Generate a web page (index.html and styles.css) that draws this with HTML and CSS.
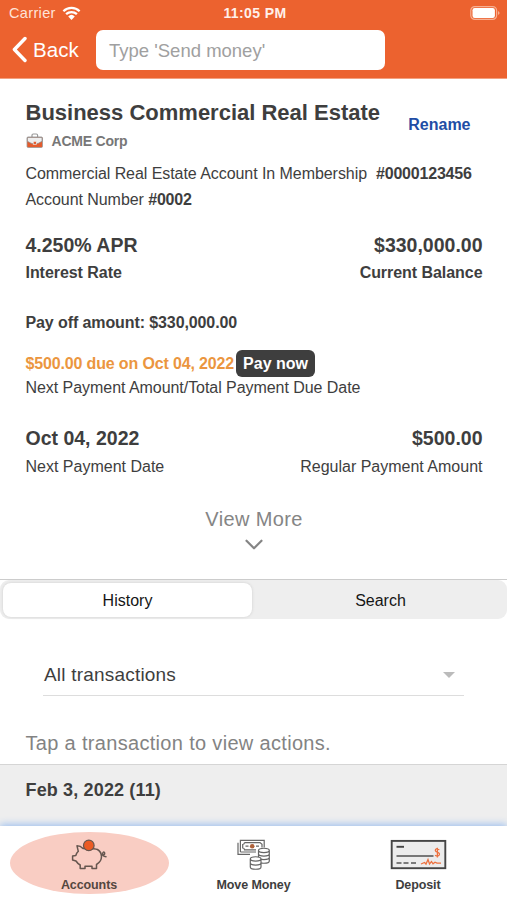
FILE: index.html
```html
<!DOCTYPE html>
<html lang="en">
<head>
<meta charset="utf-8">
<title>Business Commercial Real Estate</title>
<link rel="stylesheet" href="styles.css">
</head>
<body>
<div class="app">
  <header class="top">
    <div class="status">
      <div class="carrier"><span>Carrier</span>
        <svg width="19" height="15" viewBox="0 0 19 15"><path d="M1.4 5.2A11.6 11.6 0 0 1 17.6 5.2M4.1 8.2A7.8 7.8 0 0 1 14.9 8.2" fill="none" stroke="#fff" stroke-width="2.3"/><path d="M6.2 10.4A4.8 4.8 0 0 1 12.8 10.4L9.5 13.9Z" fill="#fff"/></svg>
      </div>
      <div class="time">11:05 PM</div>
      <div class="battery"><svg width="31" height="15" viewBox="0 0 31 15"><rect x=".8" y=".6" width="25.8" height="12.800" rx="4" fill="none" stroke="#f7af92" stroke-width="1.2"/><rect x="2.5" y="2.1" width="22.4" height="9.8" rx="2.2" fill="#fff"/><path d="M28 4.900q3.200 2.100 0 4.200z" fill="#f7af92"/></svg></div>
    </div>
    <div class="nav">
      <svg width="16" height="28" viewBox="0 0 16 28"><path d="M14 2.500L3.400 13.500L14 24.500" fill="none" stroke="#fff" stroke-width="3.400" stroke-linecap="round" stroke-linejoin="round"/></svg>
      <span class="back">Back</span>
      <div class="field">Type 'Send money'</div>
    </div>
  </header>

  <main class="details">
    <div class="heading">
      <div>
        <h1>Business Commercial Real Estate</h1>
        <div class="owner">
          <svg width="18" height="16" viewBox="0 0 18 16"><path d="M6 4V2.300Q6 1 7.300 1h3Q11.600 1 11.600 2.300V4" fill="none" stroke="#999" stroke-width="1.200"/><rect x="1" y="4" width="15.500" height="10.500" rx="1.200" fill="#e45b2c" stroke="#999" stroke-width=".8"/><path d="M1.400 4.400H16V8.300Q8.800 13.500 1.400 8.300Z" fill="#eee" stroke="#888" stroke-width=".7"/><rect x="7.200" y="8.300" width="3.200" height="3" fill="#e45b2c" stroke="#eee" stroke-width=".7"/></svg>
          <span>ACME Corp</span>
        </div>
      </div>
      <a class="rename">Rename</a>
    </div>
    <p class="membership"><span>Commercial Real Estate Account In Membership</span><b>#0000123456</b></p>
    <p class="number">Account Number <b>#0002</b></p>
    <div class="pair big first"><span>4.250% APR</span><span>$330,000.00</span></div>
    <div class="pair label strong"><span>Interest Rate</span><span>Current Balance</span></div>
    <p class="payoff">Pay off amount: $330,000.00</p>
    <div class="due"><span>$500.00 due on Oct 04, 2022</span><button>Pay now</button></div>
    <p class="due-label">Next Payment Amount/Total Payment Due Date</p>
    <div class="pair big second"><span>Oct 04, 2022</span><span>$500.00</span></div>
    <div class="pair label"><span>Next Payment Date</span><span>Regular Payment Amount</span></div>
    <div class="more"><span>View More</span>
      <svg width="18" height="12" viewBox="0 0 18 12"><path d="M1.500 1.700L9 9.300L16.500 1.700" fill="none" stroke="#858585" stroke-width="2.200" stroke-linecap="round" stroke-linejoin="round"/></svg>
    </div>
  </main>

  <div class="tabs"><div class="segments"><div class="seg on">History</div><div class="seg">Search</div></div></div>
  <div class="select"><span>All transactions</span><i></i></div>
  <p class="hint">Tap a transaction to view actions.</p>
  <div class="day">Feb 3, 2022 (11)</div>

  <footer class="bar">
    <div class="item active">
      <svg width="38" height="32" viewBox="0 0 38 32"><g fill="none" stroke="#66564f" stroke-width="1.500" stroke-linejoin="round" stroke-linecap="round"><path d="M13 9.500Q10.500 6.800 7 6.800L8.300 12.300Q6.500 14 5.800 16.500L2.600 17V21L6 22Q7.500 24.500 10.200 26V29.500H15V27.300H22V29.500H26.500V25.500Q31.500 22.500 31.500 17.500Q31.500 13 27.500 10.500Q24.500 9.200 13 9.500"/><path d="M31.500 16Q35.500 16.500 34.500 13.500Q33.300 12.400 32.600 14.500Q32.300 17.500 36 17.800"/></g><circle cx="18.800" cy="6.400" r="5.300" fill="#ec5b24" stroke="#66564f" stroke-width="1.200"/></svg>
      <span>Accounts</span>
    </div>
    <div class="item">
      <svg width="34" height="32" viewBox="0 0 34 32"><g fill="#fff" stroke="#666" stroke-width="1.200"><path d="M1 3.800V15.400H13M3.400 13V1.400H27.200V8.500M3.400 13H19" fill="none"/><path d="M7.500 3.600H23L25 5.300V8.500M7.500 3.600Q7.500 5.300 5.700 5.500V9Q7.500 9.200 7.500 10.800H19" fill="none"/><path d="M8.500 7.200h3M19 7.200h3"/><path d="M21.500 11.500V22C21.500 25 32.300 25 32.300 22V11.500C32.300 8.500 21.500 8.500 21.500 11.500C21.500 14.200 32.300 14.200 32.300 11.500M21.500 15C21.500 17.700 32.300 17.700 32.300 15M21.500 18.500C21.500 21.200 32.300 21.200 32.300 18.500"/><path d="M13.300 20V28C13.300 31 24 31 24 28V20C24 17 13.300 17 13.300 20C13.300 22.700 24 22.700 24 20M13.300 24C13.300 26.700 24 26.700 24 24"/></g><circle cx="15.200" cy="7.200" r="2.300" fill="#ad6039"/></svg>
      <span>Move Money</span>
    </div>
    <div class="item">
      <svg width="57" height="32" viewBox="0 0 57 32"><rect x="1.700" y="1.900" width="53.600" height="27.300" fill="#ececec" stroke="#454545" stroke-width="1.900"/><path d="M6.500 7.800h7.500" stroke="#444" stroke-width="1.900"/><path d="M6.500 16.900h37" stroke="#777" stroke-width="2"/><path d="M6.500 23.900h5M13.500 23.900h5M21 23.900h5" stroke="#555" stroke-width="1.500"/><path d="M31 25L34.500 23.500L36 25L38 20.500L39.500 25L41.500 22.500L43 24.800L45 23.200L47 24.200H51" fill="none" stroke="#ed703e" stroke-width="1.300"/><path d="M49.300 10.700Q45.400 8.800 45.300 11.500Q45.500 13 47.500 13.400Q50 14 49.300 16Q48 18 45 16.300M47.400 8.700V18.500" fill="none" stroke="#ed703e" stroke-width="1.300"/></svg>
      <span>Deposit</span>
    </div>
  </footer>
</div>
</body>
</html>
```

FILE: styles.css
```css
* { box-sizing: border-box; }
body, h1, p { margin: 0; }
body { font-family: "Liberation Sans", sans-serif; color: #3e3e3e; background: #fff; }
svg { display: block; flex: none; }
.app { height: 900px; width: 507px; display: flex; flex-direction: column; overflow: hidden; }
.top { height: 79px; flex: none; background: #ec622f; border-bottom: 1px solid #f3a07f; color: #fff; }
.status { height: 28px; display: grid; grid-template-columns: 1fr auto 1fr; align-items: center; padding: 0 6px 2px 9px; }
.carrier { display: flex; align-items: center; gap: 6px; font-size: 14.500px; letter-spacing: .35px; color: #ffe3d8; }
.time { font-size: 14px; font-weight: bold; letter-spacing: .4px; color: #fff0ea; }
.battery { justify-self: end; }
.nav { display: flex; align-items: center; padding-left: 11px; height: 43px; }
.back { width: 63px; padding-left: 6px; font-size: 20.500px; flex: none; margin-right: 6px; letter-spacing: .1px; }
.field { width: 289px; height: 40px; border-radius: 7px; background: #fff; color: #a0a0a0; font-size: 18.500px; letter-spacing: 0; line-height: 42px; padding-left: 13px; }
.details { height: 500px; flex: none; padding: 19px 24.500px 0 25.500px; display: flex; flex-direction: column; }
.heading { display: flex; justify-content: space-between; align-items: center; padding-right: 12px; height: 53px; }
h1 { font-size: 22px; line-height: 26px; white-space: nowrap; }
.owner { display: flex; align-items: center; gap: 8px; font-size: 14px; font-weight: bold; color: #777; margin-top: 6px; line-height: 18px; letter-spacing: -.2px; }
.rename { color: #214da5; font-size: 16px; font-weight: bold; line-height: 20px; }
.membership, .number, .payoff, .due-label, .label { font-size: 16px; line-height: 20px; white-space: nowrap; }
.membership { display: flex; gap: 9px; margin-top: 13px; letter-spacing: -.06px; }
.membership b { letter-spacing: -.2px; }
.number { margin-top: 6px; letter-spacing: -.06px; }
.number b { letter-spacing: -.2px; }
.pair { display: flex; justify-content: space-between; }
.big { font-size: 19.500px; font-weight: bold; line-height: 24px; }
.first { margin-top: 23px; }
.label { margin-top: 6px; }
.strong, .payoff { font-weight: bold; }
.strong { letter-spacing: -.05px; }
.payoff { margin-top: 30px; letter-spacing: -.1px; }
.due { display: flex; align-items: center; gap: 2px; margin-top: 17px; height: 27px; color: #eb963f; font-weight: bold; font-size: 16px; letter-spacing: -.15px; }
button { border: 0; width: 79px; height: 27px; border-radius: 6px; background: #3e3e3e; color: #fff; font: bold 16px "Liberation Sans", sans-serif; padding: 0; }
.due-label { padding-top: 1px; letter-spacing: -.05px; }
.second { margin-top: 28px; }
.second + .label { margin-top: 7px; }
.more { display: flex; flex-direction: column; align-items: center; gap: 8px; margin-top: 30px; color: #858585; font-size: 20px; line-height: 24px; letter-spacing: .35px; }
.tabs { height: 41px; flex: none; border-top: 1px solid #ccc; }
.segments { height: 39px; background: #eee; border-radius: 9px; display: grid; grid-template-columns: 249px 1fr; padding: 3px 0 2px 3px; }
.seg { display: flex; align-items: center; justify-content: center; color: #151515; font-size: 16px; padding-top: 1px; }
.seg:last-child { padding-left: 2px; }
.on { background: #fff; border-radius: 8px; box-shadow: 0 0 3px #ccc; }
.select { height: 40px; flex: none; margin: 36px 43px 0; border-bottom: 1px solid #ddd; display: flex; justify-content: space-between; align-items: center; padding: 0 9px 2px 1px; font-size: 19px; letter-spacing: .2px; }
.select i { border: 6px solid transparent; border-top-color: #bbb; border-bottom: 0; }
.hint { margin: 35px 25.500px 0; font-size: 20px; line-height: 24px; color: #838383; letter-spacing: .32px; }
.day { margin-top: 9px; height: 62px; flex: none; border-top: 1px solid #d5d5d5; background: #eee; padding: 13px 25.500px; font-size: 18px; line-height: 24px; font-weight: bold; letter-spacing: .15px; }
.bar { position: relative; height: 74px; flex: none; background: #fff; box-shadow: 0 -2px 7px #a3c3ef; display: grid; grid-template-columns: repeat(3, 159px); justify-content: center; gap: 5.500px; padding-top: 6px; }
.item { height: 62px; display: flex; flex-direction: column; align-items: center; padding-top: 7px; font-size: 12.500px; font-weight: bold; line-height: 15px; letter-spacing: -.1px; }
.item span { margin-top: 7px; }
.active { background: #f9cdc3; border-radius: 50%; color: #554740; }
```
